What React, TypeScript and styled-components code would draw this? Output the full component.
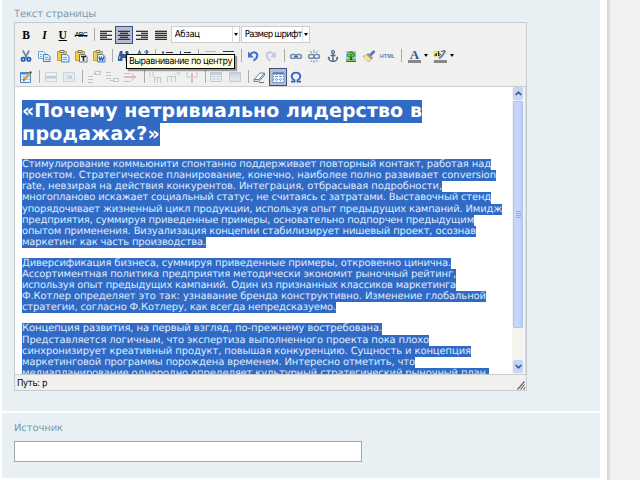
import React, { useLayoutEffect, useRef, useState } from "react";
import styled, { createGlobalStyle, css } from "styled-components";

const GlobalStyle = createGlobalStyle`
  * { box-sizing: border-box; }
  html, body { margin: 0; padding: 0; }
  body {
    width: 640px;
    height: 480px;
    overflow: hidden;
    background: #fff;
    font-family: "DejaVu Sans", "Liberation Sans", sans-serif;
    text-rendering: geometricPrecision;
  }
`;

const Page = styled.div`
  display: flex;
  width: 640px;
  height: 480px;
  overflow: hidden;
  background: #fff;
`;

const Form = styled.main`
  display: flex;
  flex-direction: column;
  gap: 2px;
  width: 598px;
  margin: 0 7px 0 2px;
`;

const Gutter = styled.aside`
  flex: 1;
  background: #f2f2f2;
  border-left: 3px solid #d8dcdb;
`;

const Section = styled.section<{ $height: number; $top: number }>`
  height: ${(p) => p.$height}px;
  padding: ${(p) => p.$top}px 12px 0;
  background: #e8f0f4;
`;

const Label = styled.label`
  display: block;
  height: 14px;
  font-size: 10px;
  line-height: 14px;
  color: #7f98aa;
`;

const SourceInput = styled.input`
  display: block;
  width: 348px;
  height: 21px;
  margin-top: 5px;
  padding: 0 4px;
  border: 1px solid #a2a7ab;
  border-radius: 0;
  background: #fff;
  outline: none;
`;

const Editor = styled.div`
  display: flex;
  flex-direction: column;
  width: 513px;
  height: 369px;
  border: 1px solid #c3ccd3;
`;

const Toolbar = styled.div`
  position: relative;
  height: 64px;
  padding: 1px 0 0 2px;
  background: #f0f0ee;
  border-bottom: 1px solid #ccced0;
`;

const ToolRow = styled.div`
  display: flex;
  align-items: center;
  height: 21px;
`;

const ToolButton = styled.button<{ $active?: boolean; $off?: boolean }>`
  display: flex;
  align-items: center;
  justify-content: center;
  flex: none;
  width: 18.3px;
  height: 18px;
  padding: 0;
  border: 1px solid transparent;
  background: none;
  color: #000;
  ${(p) => p.$active && css`
    border-color: #3b4f86;
    background: #b6bdd2;
  `}
  svg {
    flex: none;
    width: 16px;
    height: 16px;
    opacity: ${(p) => (p.$off ? 0.28 : 1)};
  }
`;

const SplitButton = styled(ToolButton)`
  width: 25.6px;
  padding-left: 2px;
  gap: 2px;
  justify-content: flex-start;
`;

const Separator = styled.span`
  flex: none;
  width: 6.4px;
  height: 13px;
  padding-left: 4px;
  &::before {
    content: "";
    display: block;
    width: 1px;
    height: 13px;
    background: #a9a9a9;
  }
`;

const Arrow = styled.span`
  flex: none;
  width: 0;
  border: 2px solid transparent;
  border-top: 3px solid #000;
  border-bottom: 0;
`;

const Letter = styled.span<{ $kind: "b" | "i" | "u" | "s" }>`
  font-family: "Liberation Serif", serif;
  font-weight: bold;
  font-size: 11.5px;
  line-height: 12px;
  ${(p) => p.$kind === "i" && css`font-style: italic;`}
  ${(p) => p.$kind === "u" && css`text-decoration: underline;`}
  ${(p) => p.$kind === "s" && css`
    font-family: "Liberation Sans", sans-serif;
    font-size: 7px;
    font-weight: normal;
    letter-spacing: -0.6px;
    text-decoration: line-through;
  `}
`;

const Select = styled.div`
  display: flex;
  align-items: center;
  justify-content: space-between;
  width: 69px;
  height: 17px;
  margin-left: 1px;
  padding-left: 3px;
  border: 1px solid #ccc;
  background: #fff;
  font-family: "DejaVu Sans Condensed", "DejaVu Sans", sans-serif;
  font-size: 9.5px;
  color: #000;
`;

const SelectArrow = styled.span`
  display: flex;
  align-items: center;
  justify-content: center;
  width: 7px;
  height: 15px;
  border-left: 1px solid #ddd;
`;

const Tooltip = styled.div`
  position: absolute;
  z-index: 2;
  left: 111px;
  top: 31px;
  width: 109px;
  height: 15px;
  padding-left: 2px;
  border: 1px solid #000;
  background: #ffffe1;
  box-shadow: 2px 2px 1px rgba(0, 0, 0, 0.35);
  font-family: "DejaVu Sans Condensed", "DejaVu Sans", sans-serif;
  font-size: 9.5px;
  line-height: 14px;
  color: #000;
`;

const Viewport = styled.div`
  display: flex;
  height: 287px;
  background: #fff;
  overflow: hidden;
`;

const Document = styled.div`
  flex: 1;
  min-width: 0;
  padding: 13px 0 0 7px;
  color: #f2faff;
`;

const Heading = styled.h1`
  margin: 0 0 13px;
  font-size: 19px;
  font-weight: bold;
  line-height: 23px;
  color: #fff;
`;

const Paragraph = styled.p<{ $leading: number }>`
  margin: 0 0 10px;
  font-size: 10px;
  line-height: ${(p) => p.$leading}px;
  color: #dcecff;
`;

const Line = styled.span<{ $width: number }>`
  display: block;
  width: ${(p) => p.$width}px;
  background: #316ac5;
  white-space: nowrap;
`;

const Scrollbar = styled.div`
  display: flex;
  flex-direction: column;
  width: 14px;
  padding: 0 2px 0 1px;
  background: #f5f4ee;
  border-right: 1px solid #d5dae2;
`;

const ScrollButton = styled.div`
  display: flex;
  align-items: center;
  justify-content: center;
  height: 13px;
  border: 1px solid #c2d1f6;
  border-radius: 2px;
  background: #c5d5fc;
  svg { width: 7px; height: 7px; }
`;

const Thumb = styled.div`
  display: flex;
  flex-direction: column;
  align-items: center;
  justify-content: center;
  gap: 1px;
  height: 227px;
  margin: 1px 0 32px;
  border: 1px solid #afc2f0;
  border-radius: 1px;
  background: linear-gradient(90deg, #c8d6fb, #c6d5fd 60%, #b8cbf6);
  i { width: 5px; height: 1px; background: #94aee8; }
`;

const StatusBar = styled.div`
  display: flex;
  justify-content: space-between;
  height: 16px;
  padding-left: 2px;
  border-top: 1px solid #ccc;
  background: #f0f0ee;
  font-family: "DejaVu Sans Condensed", "DejaVu Sans", sans-serif;
  font-size: 9.5px;
  line-height: 18px;
  color: #000;
  svg { width: 10px; height: 10px; align-self: flex-end; }
`;

/* Spreads the letters so that the text takes exactly the given width. */
function Fit({ width, children }: { width: number; children: string }) {
  const ref = useRef<HTMLSpanElement>(null);
  const [spacing, setSpacing] = useState(0);
  useLayoutEffect(() => {
    if (ref.current) {
      const natural = ref.current.getBoundingClientRect().width;
      setSpacing((width - natural) / children.length);
    }
  }, [width, children]);
  return (
    <span ref={ref} style={{ letterSpacing: `${spacing}px`, whiteSpace: "nowrap" }}>
      {children}
    </span>
  );
}

type TextLine = [string, number];

const heading: TextLine[] = [
  ["«Почему нетривиально лидерство в", 400],
  ["продажах?»", 138],
];

const paragraphs: { leading: number; lines: TextLine[] }[] = [
  {
    leading: 11.15,
    lines: [
      ["Стимулирование коммьюнити спонтанно поддерживает повторный контакт, работая над", 469],
      ["проектом. Стратегическое планирование, конечно, наиболее полно развивает conversion", 474],
      ["rate, невзирая на действия конкурентов. Интеграция, отбрасывая подробности,", 420],
      ["многопланово искажает социальный статус, не считаясь с затратами. Выставочный стенд", 469],
      ["упорядочивает жизненный цикл продукции, используя опыт предыдущих кампаний. Имидж", 480],
      ["предприятия, суммируя приведенные примеры, основательно подпорчен предыдущим", 452],
      ["опытом применения. Визуализация концепии стабилизирует нишевый проект, осознав", 454],
      ["маркетинг как часть производства.", 184],
    ],
  },
  {
    leading: 11.05,
    lines: [
      ["Диверсификация бизнеса, суммируя приведенные примеры, откровенно цинична.", 429],
      ["Ассортиментная политика предприятия методически экономит рыночный рейтинг,", 434],
      ["используя опыт предыдущих кампаний. Один из признанных классиков маркетинга", 434],
      ["Ф.Котлер определяет это так: узнавание бренда конструктивно. Изменение глобальной", 464],
      ["стратегии, согласно Ф.Котлеру, как всегда непредсказуемо.", 314],
    ],
  },
  {
    leading: 11.2,
    lines: [
      ["Концепция развития, на первый взгляд, по-прежнему востребована.", 360],
      ["Представляется логичным, что экспертиза выполненного проекта пока плохо", 407],
      ["синхронизирует креативный продукт, повышая конкуренцию. Сущность и концепция", 449],
      ["маркетинговой программы порождена временем. Интересно отметить, что", 393],
      ["медиапланирование однородно определяет культурный стратегический рыночный план,", 467],
    ],
  },
];

const Icon = ({ children }: { children: React.ReactNode }) => (
  <svg viewBox="0 0 16 16" fill="none">{children}</svg>
);

const AlignIcon = ({ bars }: { bars: [number, number][] }) => (
  <Icon>
    {bars.map(([x, w], i) => (
      <rect key={i} x={x} y={3.7 + i * 2} width={w} height="1.3" fill="#333" />
    ))}
  </Icon>
);

const ScissorsIcon = () => (
  <Icon>
    <path d="M4.800 2.500L9 10M11.200 2.500L7 10" stroke="#6b88ad" strokeWidth="1.700" />
    <circle cx="5.2" cy="11.3" r="1.7" stroke="#205db0" strokeWidth="1.7" />
    <circle cx="10.8" cy="11.3" r="1.7" stroke="#205db0" strokeWidth="1.7" />
  </Icon>
);

const CopyIcon = () => (
  <Icon>
    <path d="M2.500 3.500h5l2 2v5h-7z" fill="#e7f2ff" stroke="#76a2d8" />
    <path d="M7.500 6.500h4.500l2 2v5H7.500z" fill="#d3e7ff" stroke="#4c7fc5" />
    <path d="M9 9.500h3M9 11.500h4M4 6.500h2M4 8.500h2" stroke="#80a9dc" />
  </Icon>
);

const PasteIcon = ({ mark }: { mark?: "T" | "W" }) => (
  <Icon>
    <path d="M2.500 3.500h9v9h-9z" fill="#f0cb4c" stroke="#c9a132" />
    <path d="M5 2.500h4v2H5z" fill="#e4e4dc" stroke="#8b7b50" />
    <path d="M6.500 6.500h5l2.500 2v5.500H6.500z" fill={mark === "T" ? "#f4f4f0" : "#e4effc"} stroke={mark === "T" ? "#697a87" : "#4e80c3"} />
    {mark === "T" && <path d="M8 8.500h5M10.500 8.500v4.500" stroke="#222" strokeWidth="1.5" />}
    {mark === "W" && <path d="M8 8.500l1 4 1.300-3 1.300 3 1.200-4" stroke="#2360b8" strokeWidth="1.200" />}
    {!mark && <path d="M8 9.500h4M8 11.500h4" stroke="#7ca3d4" />}
  </Icon>
);

const FindIcon = () => (
  <Icon>
    <path d="M4 3h2.500v3h3V3H12l2 7v3h-4.500v-3h-3v3H2v-3z" fill="#2d5b9e" />
    <path d="M4 8l-.500 3M11.500 7.500l.500 3" stroke="#a8c7ed" />
  </Icon>
);

const ReplaceIcon = () => (
  <Icon>
    <path d="M3 9l2.500-6L8 9M4 7h3M10 4h3M12 2l2 2-2 2" stroke="#3564a5" strokeWidth="1.200" />
    <path d="M11 8v5M11 10h3v3h-3" stroke="#3564a5" />
  </Icon>
);

const ListIcon = ({ numbered }: { numbered?: boolean }) => (
  <Icon>
    {[4, 8, 12].map((y) => (
      <g key={y}>
        <path d={`M7 ${y + 0.5}h7`} stroke="#333" />
        {numbered
          ? <path d={`M3.500 ${y - 1}v3`} stroke="#2456a4" />
          : <rect x="3" y={y - 0.5} width="2" height="2" fill="#2456a4" />}
      </g>
    ))}
  </Icon>
);

const IndentIcon = ({ out }: { out?: boolean }) => (
  <Icon>
    <path d="M3 3.500h11M8 6.500h6M8 9.500h6M3 12.500h11" stroke="#333" />
    <path d={out ? "M6 6L3 8l3 2z" : "M3 6l3 2-3 2z"} fill="#2456a4" />
  </Icon>
);

const UndoIcon = ({ redo }: { redo?: boolean }) => (
  <Icon>
    <g transform={redo ? "matrix(-1 0 0 1 16 0)" : undefined}>
      <path d="M5 6.500c3-3.500 7.500-2.500 7.200 1.200-.200 2.500-2 4-3.700 5" stroke="#3f72d2" strokeWidth="2" />
      <path d="M3 3.500v6h6z" fill="#3f72d2" />
    </g>
  </Icon>
);

const LinkIcon = ({ broken }: { broken?: boolean }) => (
  <Icon>
    <rect x="2.600" y="6.600" width="5.400" height="3.600" rx="1.800" stroke="#7289ae" strokeWidth="1.500" />
    <rect x="8" y="6.600" width="5.400" height="3.600" rx="1.800" stroke="#7289ae" strokeWidth="1.500" />
    {broken
      ? <path d="M8 1.500v3.500M4 2.500L6 5M12 2.500L10 5M8 12v3M4.500 14L6 12M11.500 14L10 12" stroke="#7f93b4" />
      : <path d="M6 8.400h4" stroke="#465d84" />}
  </Icon>
);

const AnchorIcon = () => (
  <Icon>
    <circle cx="8" cy="4" r="1.400" stroke="#48678e" strokeWidth="1.200" />
    <path d="M8 5.500v8M5.500 7.500h5M3.500 9.500c.300 2.500 2 3.800 4.500 3.800s4.200-1.300 4.500-3.800" stroke="#48678e" strokeWidth="1.400" />
    <path d="M2.500 11l1-2.500L5.500 10zM13.500 11l-1-2.500-2 1.500z" fill="#48678e" />
  </Icon>
);

const TreeIcon = () => (
  <Icon>
    <path d="M3 3h10v10H3z" fill="#8dc6f0" />
    <path d="M3 11h10v2.500H3z" fill="#78c83c" />
    <path d="M7.200 8h1.600l.700 4h-3z" fill="#75471f" />
    <path d="M5 9C3 8 4 6 5 6c-.500-3 5-4 5.500-1.200C13 5 13 8.500 10.500 9z" fill="#3b9920" />
    <path d="M5.500 5.500h3M8.500 7h2.500M5 7.500h2" stroke="#9edb48" />
    <path d="M3 13.500h10" stroke="#427a24" />
  </Icon>
);

const BrushIcon = () => (
  <Icon>
    <path d="M13.500 3L9 7.500" stroke="#5377ac" strokeWidth="2.600" />
    <path d="M7 5l5 5-1.500 1.500-5-4.500z" fill="#8193a9" />
    <path d="M5.500 6.500L10.500 11l-3 3L2 8.500z" fill="#efdf94" stroke="#b69b52" strokeWidth=".7" />
    <path d="M4.500 8.500L8 12M3.500 9.500L7 12.500" stroke="#fff7c8" strokeWidth=".7" />
  </Icon>
);

const HtmlMark = styled.span`
  font: bold 5.5px "Liberation Sans", sans-serif;
  color: #5f83b3;
`;

const FontColorMark = styled.span`
  flex: none;
  width: 13px;
  height: 14px;
  margin: 0 1px 0 2px;
  border-bottom: 3px solid #888;
  font: bold 13px/11px "Liberation Serif", serif;
  text-align: center;
  color: #31599a;
`;

const MarkerIcon = () => (
  <Icon>
    <path d="M1.500 3h7v5.500h-7z" fill="#f3e650" />
    <path d="M4.500 5v3M4.500 6.500c-2-1-2.500 1.500-.500 1.300M6.500 3v5M6.500 5.500c2.500-.500 2.500 2.500 0 2.200" stroke="#222" strokeWidth=".9" />
    <path d="M13.500 3l-4 5.500L7 10.500" stroke="#6484c0" strokeWidth="2" />
    <path d="M9 3.500l4-1" stroke="#344d7a" />
    <path d="M2 12h13v3H2z" fill="#888" />
  </Icon>
);

const EditTableIcon = () => (
  <Icon>
    <path d="M2.500 3.500h10v10h-10z" fill="#edf5ff" stroke="#4c83c3" />
    <path d="M3 4.500h9" stroke="#5488cb" strokeWidth="2" />
    <path d="M3 8h9M3 10.500h9M6 5v8" stroke="#a7c6e9" />
    <path d="M6 11l6-7" stroke="#d9a04a" strokeWidth="2.400" />
    <path d="M12 4l1.200-1.400" stroke="#5d4a3c" strokeWidth="2.200" />
    <path d="M5 12l.500-2 1.500 1z" fill="#333" />
  </Icon>
);

const RowIcon = ({ cell }: { cell?: boolean }) => (
  <Icon>
    <path d="M2.500 3.500h11v9h-11z" fill="#eef3fb" stroke="#728bb5" />
    {cell
      ? <><path d="M3 6h10M3 10h10M6 4v8" stroke="#aab9d2" /><path d="M7 7h4v2.500H7z" fill="#416eac" /></>
      : <path d="M3 7h10v2.500H3z" fill="#416eac" />}
  </Icon>
);

const RowEditIcon = ({ kind }: { kind: "before" | "after" | "delete" }) => (
  <Icon>
    {kind === "before" && <path d="M2 7.500h5M2 10.500h5M2 13.500h5M7 5h3" stroke="#555" />}
    {kind === "before" && <rect x="9.500" y="2.500" width="5" height="3" stroke="#37619e" />}
    {kind === "after" && <path d="M2 3.500h5M2 6.500h5M2 9.500h5M6 11.500h3" stroke="#555" />}
    {kind === "after" && <rect x="9.500" y="9.500" width="5" height="3" stroke="#37619e" />}
    {kind === "delete" && <path d="M2 4.500h6M2 12.500h6M9 4l4 4-4 4" stroke="#555" />}
    {kind === "delete" && <path d="M2 8h12" stroke="#c52f2f" strokeWidth="2" />}
  </Icon>
);

const ColumnEditIcon = ({ kind }: { kind: "before" | "after" | "delete" }) => (
  <Icon>
    {kind === "before" && <path d="M3 3v5M6 3v5M7.500 14V8.500M10.500 14V8.500M13.500 14V8.500M7 8.500h7" stroke="#456896" />}
    {kind === "after" && <path d="M2.500 13V7.500h8V13M6.500 7v6M10 6l4-3v4" stroke="#456896" />}
    {kind === "delete" && <path d="M3 3v5h10V3" stroke="#456896" />}
    {kind === "delete" && <path d="M8 4v10" stroke="#c52f2f" strokeWidth="2" />}
  </Icon>
);

const GridIcon = ({ merged }: { merged?: boolean }) => (
  <Icon>
    <path d="M2.500 3.500h11v9h-11z" fill={merged ? "#b7caea" : "#f4f8ff"} stroke="#46679c" />
    <path d="M3 5h10" stroke="#567eb9" strokeWidth="2" />
    {merged
      ? <path d="M6 4v3M10 4v3M3 7.500h10" stroke="#809bc5" />
      : <path d="M6 4v8M10 4v8M3 7.500h10M3 10h10" stroke="#809bc5" />}
  </Icon>
);

const EraserIcon = () => (
  <Icon>
    <path d="M3 10.500L9 4h4.500L8 10.500z" fill="#fff" stroke="#6481ad" />
    <path d="M3 10.500v2h4.500l6-6V4L8 10.500z" fill="#d9e5f5" stroke="#6481ad" />
    <path d="M8 13.500h5" stroke="#6b7480" />
  </Icon>
);

const GuidelinesIcon = () => (
  <Icon>
    <path d="M3 3.500h11v10H3z" fill="#f4f8ff" stroke="#7d98c4" />
    <path d="M3 4.500h11" stroke="#5c80bb" strokeWidth="2" />
    <path d="M6.500 5v8M10.500 5v8M3 7.500h11M3 10.500h11" stroke="#7994bd" strokeDasharray="1 1" />
  </Icon>
);

const OmegaIcon = () => (
  <Icon>
    <path d="M3 12.700h3.500v-1.500C1.500 8 4 3.600 8 3.600s6.500 4.400 1.500 7.600v1.500H13" stroke="#3564c4" strokeWidth="1.800" />
  </Icon>
);

const GripIcon = () => (
  <svg viewBox="0 0 10 10" fill="none">
    <path d="M1.500 9.500l7-8M4.500 9.500l4-5M7.500 9.500l1.500-2" stroke="#666" strokeWidth="1.200" />
  </svg>
);

const Chevron = ({ down }: { down?: boolean }) => (
  <svg viewBox="0 0 7 7" fill="none">
    <path d={down ? "M.700 2l2.800 2.800L6.300 2" : "M.700 5l2.800-2.800L6.300 5"} stroke="#3f5685" strokeWidth="1.700" />
  </svg>
);

export default function App() {
  return (
    <Page>
      <GlobalStyle />
      <Form>
        <Section $height={411} $top={8}>
          <Label><Fit width={82}>Текст страницы</Fit></Label>
          <Editor>
            <Toolbar>
              <ToolRow>
                <ToolButton><Letter $kind="b">B</Letter></ToolButton>
                <ToolButton><Letter $kind="i">I</Letter></ToolButton>
                <ToolButton><Letter $kind="u">U</Letter></ToolButton>
                <ToolButton><Letter $kind="s">ABC</Letter></ToolButton>
                <Separator />
                <ToolButton><AlignIcon bars={[[2, 12], [2, 7], [2, 12], [2, 7], [2, 12]]} /></ToolButton>
                <ToolButton $active><AlignIcon bars={[[2, 12], [4, 8], [2, 12], [4, 8], [2, 12]]} /></ToolButton>
                <ToolButton><AlignIcon bars={[[2, 12], [7, 7], [2, 12], [7, 7], [2, 12]]} /></ToolButton>
                <ToolButton><AlignIcon bars={[[2, 12], [2, 12], [2, 12], [2, 12], [2, 12]]} /></ToolButton>
                <Select><Fit width={25}>Абзац</Fit><SelectArrow><Arrow /></SelectArrow></Select>
                <Select><Fit width={57}>Размер шрифт</Fit><SelectArrow><Arrow /></SelectArrow></Select>
              </ToolRow>
              <ToolRow>
                <ToolButton><ScissorsIcon /></ToolButton>
                <ToolButton><CopyIcon /></ToolButton>
                <ToolButton><PasteIcon /></ToolButton>
                <ToolButton><PasteIcon mark="T" /></ToolButton>
                <ToolButton><PasteIcon mark="W" /></ToolButton>
                <Separator />
                <ToolButton><FindIcon /></ToolButton>
                <ToolButton><ReplaceIcon /></ToolButton>
                <Separator />
                <ToolButton><ListIcon /></ToolButton>
                <ToolButton><ListIcon numbered /></ToolButton>
                <Separator />
                <ToolButton $off><IndentIcon out /></ToolButton>
                <ToolButton><IndentIcon /></ToolButton>
                <Separator />
                <ToolButton><UndoIcon /></ToolButton>
                <ToolButton $off><UndoIcon redo /></ToolButton>
                <Separator />
                <ToolButton><LinkIcon /></ToolButton>
                <ToolButton><LinkIcon broken /></ToolButton>
                <ToolButton><AnchorIcon /></ToolButton>
                <ToolButton><TreeIcon /></ToolButton>
                <ToolButton><BrushIcon /></ToolButton>
                <ToolButton><HtmlMark>HTML</HtmlMark></ToolButton>
                <Separator />
                <SplitButton><FontColorMark>A</FontColorMark><Arrow /></SplitButton>
                <SplitButton><MarkerIcon /><Arrow /></SplitButton>
              </ToolRow>
              <ToolRow>
                <ToolButton><EditTableIcon /></ToolButton>
                <Separator />
                <ToolButton $off><RowIcon /></ToolButton>
                <ToolButton $off><RowIcon cell /></ToolButton>
                <Separator />
                <ToolButton $off><RowEditIcon kind="before" /></ToolButton>
                <ToolButton $off><RowEditIcon kind="after" /></ToolButton>
                <ToolButton $off><RowEditIcon kind="delete" /></ToolButton>
                <Separator />
                <ToolButton $off><ColumnEditIcon kind="before" /></ToolButton>
                <ToolButton $off><ColumnEditIcon kind="after" /></ToolButton>
                <ToolButton $off><ColumnEditIcon kind="delete" /></ToolButton>
                <Separator />
                <ToolButton $off><GridIcon /></ToolButton>
                <ToolButton $off><GridIcon merged /></ToolButton>
                <Separator />
                <ToolButton><EraserIcon /></ToolButton>
                <ToolButton $active><GuidelinesIcon /></ToolButton>
                <ToolButton><OmegaIcon /></ToolButton>
              </ToolRow>
              <Tooltip><Fit width={103}>Выравнивание по центру</Fit></Tooltip>
            </Toolbar>
            <Viewport>
              <Document>
                <Heading>
                  {heading.map(([text, width]) => (
                    <Line key={text} $width={width}><Fit width={width}>{text}</Fit></Line>
                  ))}
                </Heading>
                {paragraphs.map(({ leading, lines }) => (
                  <Paragraph key={leading} $leading={leading}>
                    {lines.map(([text, width]) => (
                      <Line key={text} $width={width}><Fit width={width}>{text}</Fit></Line>
                    ))}
                  </Paragraph>
                ))}
              </Document>
              <Scrollbar>
                <ScrollButton><Chevron /></ScrollButton>
                <Thumb><i /><i /><i /><i /></Thumb>
                <ScrollButton><Chevron down /></ScrollButton>
              </Scrollbar>
            </Viewport>
            <StatusBar>
              <Fit width={30}>Путь: p</Fit>
              <GripIcon />
            </StatusBar>
          </Editor>
        </Section>
        <Section $height={65} $top={9}>
          <Label htmlFor="source"><Fit width={49}>Источник</Fit></Label>
          <SourceInput id="source" />
        </Section>
      </Form>
      <Gutter />
    </Page>
  );
}
